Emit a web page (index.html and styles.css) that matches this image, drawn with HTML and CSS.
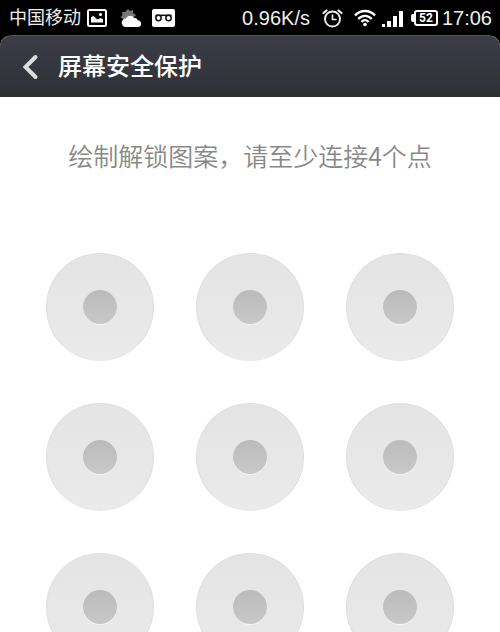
FILE: index.html
```html
<!DOCTYPE html>
<html lang="zh-CN">
<head>
    <meta charset="UTF-8">
    <meta name="viewport" content="width=device-width, initial-scale=1.0">
    <title>屏幕安全保护</title>
    <link rel="stylesheet" href="styles.css">
</head>
<body>
    <div class="status-bar">
        <div class="status-left">
            <span class="carrier">中国移动</span>
            <svg class="icon-picture" width="20" height="18" viewBox="0 0 20 18">
                <rect x="1" y="1" width="18" height="16" rx="1.5" fill="none" stroke="#fff" stroke-width="2"/>
                <path d="M4 13.500V8.500C5.500 6.500 7.500 7 8.500 9L10.500 10.500L12.500 9.500C14 9 15 9.500 16 10.500V13.500Z" fill="#fff"/>
                <circle cx="13.500" cy="5.500" r="1.500" fill="#fff"/>
            </svg>
            <svg class="icon-weather" width="22" height="19" viewBox="0 0 22 19">
                <path d="M8 0L10 2L13 1L13 4L16 6L14 8L14 11L3 12L3 10L0.500 8L2.500 6L2 3L5 3Z" fill="#777"/>
                <path d="M5 18A4.300 4.300 0 0 1 4 10C5 9.500 5.500 9.600 6 9.700C7 6.500 12 5.500 14 9.200C16 8.500 17.500 10 17.500 11.200C22 11 22.500 18 18 18Z" fill="#fff"/>
            </svg>
            <svg class="icon-voicemail" width="23" height="18" viewBox="0 0 23 18">
                <rect width="23" height="18" rx="2" fill="#fff"/>
                <g fill="none" stroke="#111" stroke-width="1.500">
                    <circle cx="6.500" cy="9" r="2.700"/>
                    <circle cx="16.500" cy="9" r="2.700"/>
                    <path d="M3.500 6.300H19.500"/>
                </g>
            </svg>
        </div>
        <div class="status-right">
            <span class="speed">0.96K/s</span>
            <svg class="icon-alarm" width="21" height="19" viewBox="0 0 21 19">
                <g fill="none" stroke="#eee" stroke-linecap="round">
                    <circle cx="10.500" cy="10" r="7.500" stroke-width="1.900"/>
                    <path d="M10.500 6V10.500H14" stroke-width="1.600"/>
                    <path d="M1.500 4L4.500 1.500M19.500 4L16.500 1.500" stroke-width="2.200"/>
                </g>
            </svg>
            <svg class="icon-wifi" width="22" height="18" viewBox="0 0 22 18">
                <g fill="none" stroke="#fff" stroke-width="2.400">
                    <path d="M1 6.500C6.500 0.500 15.500 0.500 21 6.500"/>
                    <path d="M4.300 10C8 5.800 14 5.800 17.700 10"/>
                    <path d="M7.500 13C9.500 10.500 12.500 10.500 14.500 13"/>
                </g>
                <circle cx="11" cy="15.500" r="1.800" fill="#fff"/>
            </svg>
            <svg class="icon-signal" width="21" height="17" viewBox="0 0 21 17">
                <path d="M0 14H3V17H0ZM5 11H9V17H5ZM11 6H15V17H11ZM17 1H21V17H17Z" fill="#fff"/>
            </svg>
            <span class="battery"><span class="battery-level">52</span></span>
            <span class="clock">17:06</span>
        </div>
    </div>

    <header class="title-bar">
        <button class="back" type="button" aria-label="返回">
            <svg width="18" height="26" viewBox="0 0 18 26">
                <path d="M14.500 3L4.500 13L14.500 23" fill="none" stroke="#ddd" stroke-width="4" stroke-linecap="round" stroke-linejoin="miter"/>
            </svg>
        </button>
        <h1>屏幕安全保护</h1>
    </header>

    <main>
        <p class="hint">绘制解锁图案，请至少连接4个点</p>
        <div class="pattern">
            <button class="node" type="button" aria-label="1"></button>
            <button class="node" type="button" aria-label="2"></button>
            <button class="node" type="button" aria-label="3"></button>
            <button class="node" type="button" aria-label="4"></button>
            <button class="node" type="button" aria-label="5"></button>
            <button class="node" type="button" aria-label="6"></button>
            <button class="node" type="button" aria-label="7"></button>
            <button class="node" type="button" aria-label="8"></button>
            <button class="node" type="button" aria-label="9"></button>
        </div>
    </main>
</body>
</html>
```
FILE: styles.css
```css
* {
    box-sizing: border-box;
}
html {
    height: 100%;
    background: #fff;
}
body {
    height: 100%;
    margin: 0;
    overflow: hidden;
    background: #fff;
    font-family: Roboto, "Noto Sans CJK SC", sans-serif;
}
button {
    padding: 0;
    border: none;
    background: none;
    cursor: pointer;
}
svg {
    display: block;
    flex: none;
}

/* 状态栏 */
.status-bar {
    display: flex;
    justify-content: space-between;
    align-items: center;
    height: 36px;
    padding: 0 8px 0 9px;
    background: #000;
    color: #eee;
    white-space: nowrap;
}
.status-left,
.status-right {
    display: flex;
    align-items: center;
}
.carrier {
    margin-right: 6px;
    font-size: 18px;
    line-height: 36px;
}
.icon-weather {
    margin: 0 10px 0 13px;
}
.speed,
.clock {
    font-family: "Liberation Sans", Arial, sans-serif;
    font-size: 20px;
    line-height: 36px;
}
.icon-alarm {
    margin: 0 11px 0 12px;
}
.icon-signal {
    margin: 0 8px 0 6px;
}
.battery {
    display: flex;
    align-items: center;
    margin-right: 4px;
}
.battery::before {
    content: "";
    width: 3px;
    height: 8px;
    border-radius: 2px 0 0 2px;
    background: #fff;
}
.battery-level {
    width: 24px;
    height: 16px;
    border: 2px solid #fff;
    border-radius: 3px;
    color: #fff;
    font-size: 12px;
    font-weight: bold;
    line-height: 12px;
    text-align: center;
}

/* 标题栏 */
.title-bar {
    display: flex;
    align-items: center;
    height: 62px;
    margin-top: -1px;
    padding: 0 21px;
    border-top: 1px solid #55555c;
    border-radius: 12px 12px 0 0;
    background: linear-gradient(#3d3d46, #343740 50%, #303033);
    box-shadow: 0 -12px 0 12px #000;
    clip-path: inset(0 0 0 0);
}
.back {
    margin-right: 19px;
}
h1 {
    margin: 0;
    color: #fff;
    font-size: 24px;
    font-weight: 500;
    line-height: 36px;
}

/* 解锁图案 */
.hint {
    margin: 0;
    padding: 40px 0 80px;
    color: #888;
    font-family: "Noto Sans CJK SC", sans-serif;
    font-size: 25px;
    font-weight: 350;
    line-height: 36px;
    text-align: center;
}
.pattern {
    display: grid;
    grid-template-columns: repeat(3, 108px);
    gap: 42px;
    justify-content: center;
}
.node {
    display: flex;
    align-items: center;
    justify-content: center;
    height: 108px;
    border: 1px solid #dfdfdf;
    border-bottom-color: #e8e8e8;
    border-radius: 50%;
    background: linear-gradient(#e4e4e4, #eaeaea);
}
.node::before {
    content: "";
    width: 34px;
    height: 34px;
    border-radius: 50%;
    background: linear-gradient(#bbb, #c8c8c8);
    box-shadow: 0 1px 0 #f4f4f4;
}
```
